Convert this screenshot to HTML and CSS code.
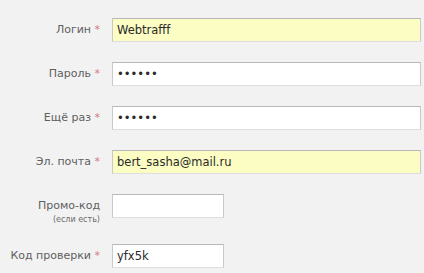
FILE: index.html
```html
<!DOCTYPE html>
<html lang="ru">
<head>
<meta charset="utf-8">
<link rel="stylesheet" href="styles.css">
</head>
<body>
<form class="form">
  <div class="row">
    <label class="label"><span class="text">Логин <span class="req">*</span></span></label>
    <input class="field wide filled" type="text" value="Webtrafff">
  </div>
  <div class="row">
    <label class="label"><span class="text">Пароль <span class="req">*</span></span></label>
    <input class="field wide" type="password" value="qwerty">
  </div>
  <div class="row">
    <label class="label"><span class="text">Ещё раз <span class="req">*</span></span></label>
    <input class="field wide" type="password" value="qwerty">
  </div>
  <div class="row">
    <label class="label"><span class="text">Эл. почта <span class="req">*</span></span></label>
    <input class="field wide filled" type="text" value="bert_sasha@mail.ru">
  </div>
  <div class="row promo">
    <label class="label"><span class="text">Промо-код</span><span class="hint">(если есть)</span></label>
    <input class="field short" type="text" value="">
  </div>
  <div class="row">
    <label class="label"><span class="text">Код проверки <span class="req">*</span></span></label>
    <input class="field short" type="text" value="yfx5k">
  </div>
</form>
</body>
</html>
```

FILE: styles.css
```css
html, body {
  margin: 0;
  padding: 0;
  background: #f2f2f2;
}
.form {
  display: flex;
  flex-direction: column;
  gap: 20px;
  padding-top: 18px;
  font-family: "DejaVu Sans", sans-serif;
}
.row {
  display: flex;
  align-items: flex-start;
  gap: 12px;
}
.label {
  width: 100px;
  display: flex;
  flex-direction: column;
  align-items: flex-end;
  text-align: right;
  padding-top: 5px;
  font-size: 11px;
  line-height: 14px;
  color: #5e5e5e;
  white-space: nowrap;
}
.req {
  color: #d47a7a;
}
.hint {
  font-size: 8px;
  line-height: 11px;
  color: #6a6a6a;
  margin-top: 1px;
}
.promo {
  height: 30px;
}
.field {
  box-sizing: border-box;
  height: 24px;
  margin: 0;
  padding: 0 4px;
  border: 1px solid #c9c9c9;
  border-top-color: #b8b8b8;
  border-bottom-color: #dedede;
  background: #fff;
  font-family: "DejaVu Sans", sans-serif;
  font-size: 11.5px;
  color: #2a2a2a;
  outline: none;
}
.filled {
  background: #fbfdc2;
}
.wide {
  width: 309px;
}
.short {
  width: 112px;
}
```
